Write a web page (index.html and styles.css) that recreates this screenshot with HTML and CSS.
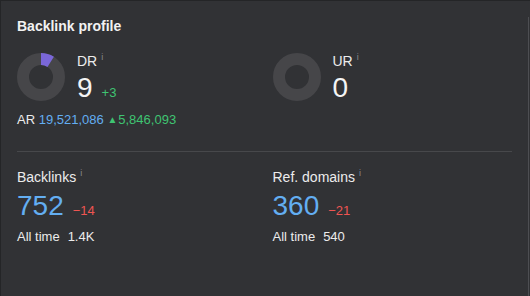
FILE: index.html
```html
<!DOCTYPE html>
<html>
<head>
<meta charset="utf-8">
<link rel="stylesheet" href="styles.css">
</head>
<body>
<div class="card">
  <h2 class="title">Backlink profile</h2>
  <div class="grid top">
    <div class="col">
      <div class="rating">
        <svg class="donut" width="48" height="48" viewBox="0 0 48 48">
          <circle cx="24" cy="24" r="18" fill="none" stroke="#464649" stroke-width="12"/>
          <circle cx="24" cy="24" r="18" fill="none" stroke="#7a67d8" stroke-width="12" stroke-dasharray="10.2 113.1" transform="rotate(-90 24 24)"/>
        </svg>
        <div class="rating-text">
          <div class="label">DR<span class="info">i</span></div>
          <div class="value-row"><span class="big">9</span><span class="delta up">+3</span></div>
        </div>
      </div>
      <div class="ar">AR <span class="blue">19,521,086</span> <span class="up"><span class="tri">▲</span>5,846,093</span></div>
    </div>
    <div class="col">
      <div class="rating">
        <svg class="donut" width="48" height="48" viewBox="0 0 48 48">
          <circle cx="24" cy="24" r="18" fill="none" stroke="#464649" stroke-width="12"/>
        </svg>
        <div class="rating-text">
          <div class="label">UR<span class="info">i</span></div>
          <div class="value-row"><span class="big">0</span></div>
        </div>
      </div>
    </div>
  </div>
  <div class="divider"></div>
  <div class="grid bottom">
    <div class="col">
      <div class="label">Backlinks<span class="info">i</span></div>
      <div class="value-row"><span class="big blue">752</span><span class="delta down">−14</span></div>
      <div class="alltime">All time<span class="num">1.4K</span></div>
    </div>
    <div class="col">
      <div class="label">Ref. domains<span class="info">i</span></div>
      <div class="value-row"><span class="big blue">360</span><span class="delta down">−21</span></div>
      <div class="alltime">All time<span class="num">540</span></div>
    </div>
  </div>
  <div class="scroll"></div>
</div>
</body>
</html>
```
FILE: styles.css
```css
html, body {
  margin: 0;
  padding: 0;
  background: #313235;
}
body {
  width: 530px;
  height: 296px;
  overflow: hidden;
  font-family: "Liberation Sans", Arial, sans-serif;
  color: #ececec;
}
.card {
  position: relative;
  box-sizing: border-box;
  height: 296px;
  border-top: 1px solid #242527;
  border-left: 1px solid #242527;
  padding: 17px 17px 0 16px;
}
.title {
  margin: 0;
  font-size: 14px;
  line-height: 16px;
  font-weight: bold;
  color: #f2f2f2;
}
.grid {
  display: grid;
  grid-template-columns: 1fr 1fr;
  column-gap: 16px;
  width: 495px;
}
.top {
  margin-top: 19px;
}
.rating {
  display: flex;
  align-items: flex-start;
  gap: 12px;
  height: 48px;
}
.donut {
  display: block;
  flex: none;
}
.label {
  font-size: 14px;
  line-height: 16px;
  color: #ececec;
}
.info {
  display: inline-block;
  font-size: 9px;
  line-height: 9px;
  color: #8a8b8f;
  margin-left: 4px;
  vertical-align: 6px;
}
.rating-text .value-row {
  margin-top: 3px;
}
.value-row {
  display: flex;
  align-items: baseline;
  gap: 9px;
  height: 32px;
}
.big {
  font-size: 28px;
  line-height: 32px;
  color: #f4f4f4;
}
.big.blue {
  color: #63aef2;
}
.delta {
  font-size: 13px;
  line-height: 16px;
}
.up {
  color: #3fc472;
}
.down {
  color: #ef5552;
}
.blue {
  color: #63aef2;
}
.ar {
  margin-top: 11px;
  font-size: 13px;
  line-height: 16px;
  color: #ececec;
  white-space: nowrap;
}
.tri {
  font-size: 10px;
  vertical-align: 1px;
  margin-right: 1px;
}
.divider {
  height: 1px;
  background: #47484b;
  width: 495px;
  margin-top: 23px;
}
.bottom {
  margin-top: 17px;
}
.bottom .value-row {
  margin-top: 5px;
}
.alltime {
  margin-top: 7px;
  font-size: 13px;
  line-height: 16px;
  color: #ececec;
}
.alltime .num {
  margin-left: 8px;
}
.scroll {
  position: absolute;
  right: 1px;
  top: 16px;
  bottom: 0;
  width: 1px;
  background: #4d4e52;
}
```
